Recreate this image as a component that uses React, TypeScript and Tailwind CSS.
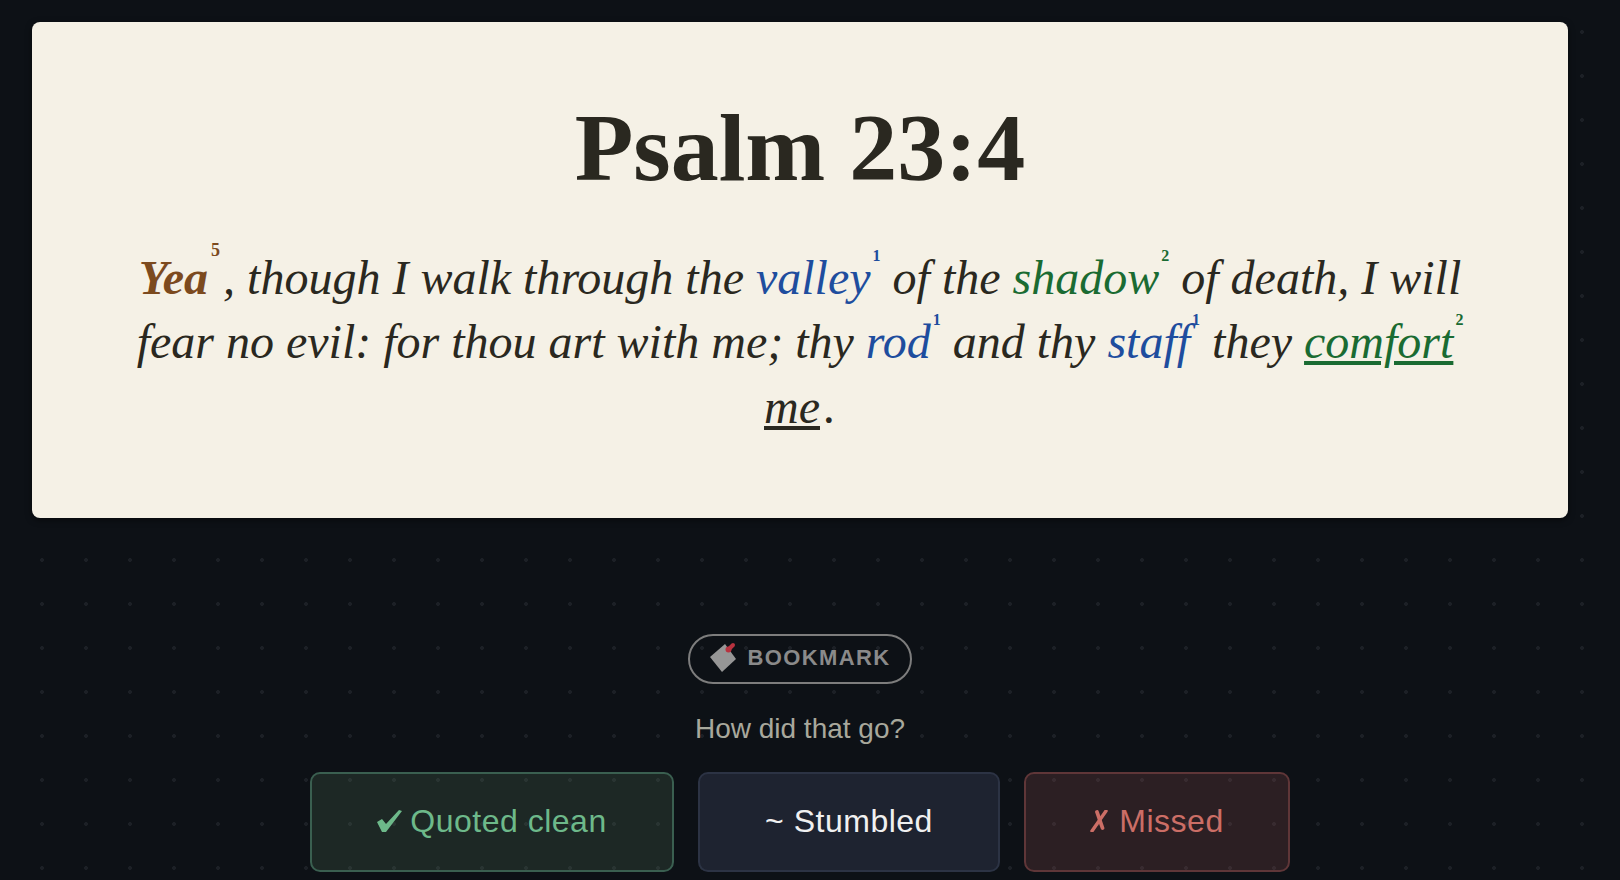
const serif = "font-['Liberation_Serif',serif]";

function Mark({ n, color }: { n: number; color: string }) {
  return (
    <sup className={`${color} top-[-33px] not-italic font-bold text-[16px] ml-[2px] leading-none`}>
      {n}
    </sup>
  );
}

function TagIcon() {
  return (
    <svg viewBox="0 0 28 30" className="w-[28px] h-[30px]">
      <path d="M15 2 L26 17 L12 30 L0 15 Z" fill="#969696" />
      <path d="M18.5 7.5 L23 3" stroke="#b8323f" strokeWidth="4" strokeLinecap="round" />
      <circle cx="18.5" cy="7.5" r="3" fill="#b8323f" />
    </svg>
  );
}

function CheckIcon() {
  return (
    <svg viewBox="0 0 25 24" className="w-[25px] h-[24px]">
      <path d="M0 13 L5 10 L9 15 L22 1 L25 2 L9 23 L5 23 Z" fill="#6db98a" />
    </svg>
  );
}

function CrossIcon() {
  return (
    <svg viewBox="0 0 18 22" className="w-[18px] h-[22px]">
      <path d="M2 21 L16 1" stroke="#cc6e66" strokeWidth="3.4" strokeLinecap="round" />
      <path d="M7 2 L12.5 18" stroke="#cc6e66" strokeWidth="3.8" strokeLinecap="round" />
    </svg>
  );
}

export default function App() {
  return (
    <div className="h-[880px] w-full overflow-hidden bg-[#0d1116] bg-[radial-gradient(circle,#1c2026_1.6px,transparent_2.2px)] bg-[size:44px_44px] bg-[position:20px_10px] font-['Liberation_Sans',sans-serif]">
      <div className="w-[1600px] px-8 pt-[22px] flex flex-col items-center">
        <section className={`w-full h-[496px] rounded-lg bg-[#f5f1e6] shadow-[0_2px_6px_rgba(0,0,0,0.5)] text-center text-[#2a2820] pt-[73px] ${serif}`}>
          <h1 className="text-[96px] leading-[1.1] font-bold">Psalm 23:4</h1>
          <p className="mt-[45px] px-[96px] text-[48px] leading-[64.8px] italic">
            <span className="font-bold text-[#7c4a1e]">Yea</span>
            <sup className="text-[#7c4a1e] top-[-38px] not-italic font-bold text-[18px] ml-[3px] mr-[3px] leading-none">5</sup>
            , though I walk through the{' '}
            <span className="text-[#1e4d9e]">valley</span>
            <Mark n={1} color="text-[#1e4d9e]" /> of the{' '}
            <span className="text-[#1a6b32]">shadow</span>
            <Mark n={2} color="text-[#1a6b32]" /> of death, I will fear no evil: for thou art with me; thy{' '}
            <span className="text-[#1e4d9e]">rod</span>
            <Mark n={1} color="text-[#1e4d9e]" /> and thy{' '}
            <span className="text-[#1e4d9e]">staff</span>
            <Mark n={1} color="text-[#1e4d9e]" /> they{' '}
            <span className="text-[#1a6b32] underline decoration-[4px] underline-offset-[3px]">comfort</span>
            <Mark n={2} color="text-[#1a6b32]" />{' '}
            <span className="mr-[4px] underline decoration-[4px] underline-offset-[3px]">me</span>.
          </p>
        </section>

        <button className="mt-[116px] h-[50px] w-[224px] rounded-full border-2 border-[#7d7d7d] flex items-center justify-center gap-[10px] text-[22px] font-bold tracking-[1.35px] text-[#8a8a8a]">
          <span className="mb-[4px] flex">
            <TagIcon />
          </span>
          <span className="mb-[4px]">BOOKMARK</span>
        </button>

        <p className="mt-[28px] text-[28px] leading-[34px] text-[#a8a89c]">How did that go?</p>

        <div className="mt-[26px] flex gap-6">
          <button className="pb-[2px] h-[100px] w-[364px] rounded-[10px] border-2 border-[#3a5f50] bg-[rgba(93,137,98,0.2)] flex items-center justify-center gap-[8px] text-[32px] tracking-[0.5px] text-[#6db98a]">
            <CheckIcon />
            Quoted clean
          </button>
          <button className="pb-[2px] h-[100px] w-[302px] rounded-[10px] border-2 border-[#2c3344] bg-[#1e2330] text-[32px] tracking-[0.5px] text-[#f0f0f0]">
            ~ Stumbled
          </button>
          <button className="pb-[2px] h-[100px] w-[266px] rounded-[10px] border-2 border-[#5f3638] bg-[rgba(168,92,88,0.2)] flex items-center justify-center gap-[11px] text-[32px] tracking-[0.5px] text-[#cc6e66]">
            <CrossIcon />
            Missed
          </button>
        </div>
      </div>
    </div>
  );
}
